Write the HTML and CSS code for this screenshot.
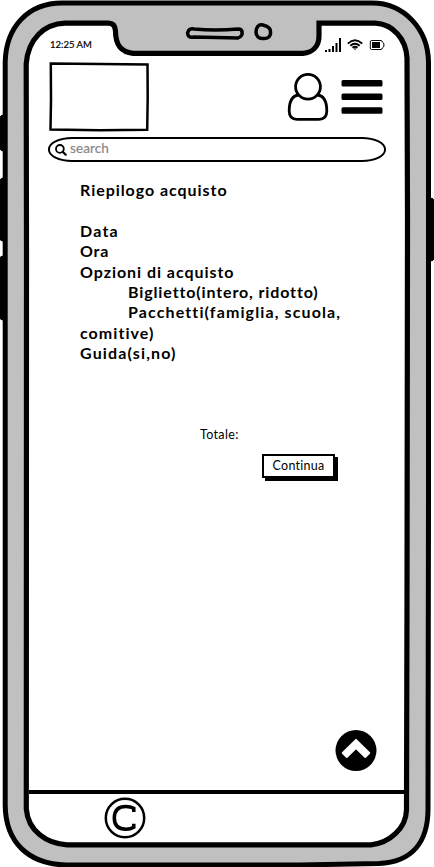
FILE: index.html
```
<!DOCTYPE html>
<html lang="it">
<head>
<meta charset="utf-8">
<meta name="viewport" content="width=device-width">
<title>Riepilogo acquisto</title>
<link rel="stylesheet" href="styles.css">
</head>
<body>
<div class="phone">
  <svg class="frame" viewBox="0 0 434 867" aria-hidden="true">
    <path d="M3 115Q0 115 0 119V147Q0 151 3 151M3 178Q0 178 0 182V238Q0 241 3 241M3 256Q0 256 0 259V317Q0 320 3 320M430 198Q434 198 434 201V258Q434 261 430 261" fill="#000" stroke="#000"/>
    <path class="shell" d="M5.200 62C6 27 28 3 62 3H372C404 3 428 29 428.500 62V500L428 809C428 842 412 862 379 863.500L300 865H66C29 864 5.500 843 5.200 805Z"/>
    <path class="glass" d="M26.200 64C28 39 44 24 65 23.200H108Q115 23 115.500 31C115.500 45 121 52 133 53.300H303C313 52.500 319 46 319 36V23.200H375C393 24 406 39 407 58L407.500 220L407 600L406.500 810C406 828 390 843 371 844.800H67C47 844 28 831 26.300 809L26.500 250Z"/>
    <path class="thin" d="M194 29C188 28 187 33 188 35Q189 38 194 37L238 38Q243 36 242 32Q242 29 238 29Q215 31 194 29Z"/>
    <path class="thin" d="M263 25C258 24 256 28 256 32C256 36 259 39 263 38.500C268 39 271 36 270.500 32Q271 27 263 25Z"/>
  </svg>
  <div class="screen">
    <div class="status">
      <span class="time">12:25 AM</span>
      <svg width="62" height="18" viewBox="323 36 62 18" aria-hidden="true">
        <path d="M325 50h2v2h-2zM328.500 49h2v3h-2zM332 46h2v6h-2zM335.500 43h2v9h-2zM339 38h2v14h-2z"/>
        <g fill="none" stroke="#000" stroke-width="1.900"><path d="M347.800 43.600Q355 36.800 362.200 43.600M350.300 45.800Q355 41.500 359.700 45.800M352.500 47.700Q355 45.800 357.500 47.700"/></g>
        <path d="M353.300 48.500h3.400l-1.700 1.500z"/>
        <path d="M371.500 40.500H381Q382 40.500 382.300 42Q384 42.500 384 45Q384 47.500 382.300 48Q382 49.500 381 49.500H371.500Q370.300 49.500 370.300 48V42Q370.300 40.500 371.500 40.500Z" fill="none" stroke="#000"/>
        <path d="M372 42h8v6h-8z"/>
      </svg>
    </div>
    <header class="header">
      <svg class="logo" width="100" height="70" viewBox="49 62 100 70" aria-hidden="true"><path d="M50.800 63.500L147.500 64.500L147.700 97L147.200 129.700L100 130.300L50.500 129.500L51 100Z" fill="#fff" stroke="#000" stroke-width="2.500"/></svg>
      <div class="actions">
        <svg width="42" height="50" viewBox="287 72 42 50" aria-hidden="true"><g fill="none" stroke="#000" stroke-width="2.800"><circle cx="308" cy="86.800" r="12.400"/><path d="M298.500 95C291 96 289.200 104 289.200 111Q289.200 119.300 297 119.300H319Q326.800 119.300 326.800 111C326.800 104 325 96 317.500 95"/></g></svg>
        <svg width="42" height="36" viewBox="341 79 42 36" aria-hidden="true"><path d="M343 80H381Q382.500 80 382.500 81.500V85Q382.500 86.500 381 86.500H343Q341.500 86.500 341.500 85V81.500Q341.500 80 343 80ZM343 93.500H381Q382.500 93.500 382.500 95V98.500Q382.500 100 381 100H343Q341.500 100 341.500 98.500V95Q341.500 93.500 343 93.500ZM343 107.200H381Q382.500 107.200 382.500 108.700V112.200Q382.500 113.700 381 113.700H343Q341.500 113.700 341.500 112.200V108.700Q341.500 107.200 343 107.200Z"/></svg>
      </div>
    </header>
    <div class="search">
      <svg width="12" height="12" viewBox="0 0 12 12" aria-hidden="true"><circle cx="4.900" cy="4.900" r="3.900" fill="none" stroke="#000" stroke-width="1.800"/><path d="M7.700 7.700L10.700 10.700" stroke="#000" stroke-width="2.200" stroke-linecap="round"/></svg>
      <span>search</span>
    </div>
    <main class="summary">
      <h1 class="l-title">Riepilogo acquisto</h1>
      <p class="l-date">Data</p>
      <p class="l-hour">Ora</p>
      <p class="l-options">Opzioni di acquisto</p>
      <p class="indent l-ticket">Biglietto(intero, ridotto)</p>
      <p class="indent l-pack">Pacchetti(famiglia, scuola,</p>
      <p class="l-group">comitive)</p>
      <p class="l-guide">Guida(si,no)</p>
    </main>
    <div class="total">Totale:</div>
    <button class="continue">Continua</button>
    <svg class="top" width="42" height="42" viewBox="335 730 42 42" aria-hidden="true"><circle cx="356" cy="750.500" r="20.500"/><path d="M356 739.800L369.300 753L365.200 757L356 748.200L346.800 757L342.700 753Z" fill="#fff" stroke="#fff" stroke-width="1.800" stroke-linejoin="round"/></svg>
    <footer class="footer">
      <svg width="42" height="42" viewBox="104 797 42 42" aria-hidden="true"><g fill="none" stroke="#000"><circle cx="125" cy="818" r="19.200" stroke-width="2.500"/><path d="M133.800 812V808.200Q130.500 806.500 126 806.500C118 806.500 114.300 811 114.300 818C114.300 825 118 829.200 126 829.200Q130.500 829.200 133.800 827.200V823.800" stroke-width="3.500"/></g></svg>
    </footer>
  </div>
</div>
</body>
</html>
```
FILE: styles.css
```
* { box-sizing: border-box; }
body { margin: 0; background: #fff; color: #000; font-family: Lato, "Open Sans", sans-serif; overflow: hidden; }
svg { display: block; flex: none; }
.phone { position: relative; width: 434px; height: 867px; }
.frame { position: absolute; inset: 0; width: 434px; height: 867px; }
.shell { fill: #c0c0c0; stroke: #000; stroke-width: 5; }
.glass { fill: #fff; stroke: #000; stroke-width: 5.2; }
.thin { fill: none; stroke: #000; stroke-width: 3.5; }
.screen { position: relative; height: 867px; padding: 36px 28px 0 29px; display: flex; flex-direction: column; }
.status { height: 18px; padding: 0 21px; display: flex; justify-content: space-between; }
.time { font-size: 9.5px; line-height: 17px; -webkit-text-stroke: .2px #000; }
.header { display: flex; justify-content: space-between; margin: 8px 23px 0 20px; height: 70px; }
.actions { display: flex; gap: 12px; padding-top: 10px; }
.actions svg:last-child { margin-top: 7px; }
.search { margin: 5px 19px 0; width: 338px; height: 25px; border: 2px solid #000; border-radius: 24px / 12px; display: flex; align-items: center; gap: 3px; padding-left: 5px; font-size: 13.5px; color: #858585; letter-spacing: .1px; -webkit-text-stroke: .2px #858585; }
.search span { margin-top: -4px; }
.summary { margin: 18px 0 0 51px; font-size: 16px; line-height: 20.4px; font-weight: 700; height: 184px; white-space: nowrap; }
.summary h1 { margin: 0 0 20.4px; font: inherit; }
.summary p { margin: 0; }
.summary .indent { padding-left: 48px; }
.l-title { letter-spacing: .95px; }
.l-date { letter-spacing: 1.2px; }
.l-hour { letter-spacing: .8px; }
.l-options { letter-spacing: .95px; }
.l-ticket { letter-spacing: .87px; }
.l-pack { letter-spacing: 1.12px; }
.l-group { letter-spacing: 1.05px; }
.l-guide { letter-spacing: 1.15px; }
.total { margin: 62px 0 0 171px; height: 18px; font-size: 12.5px; line-height: 18px; letter-spacing: .35px; }
.continue { margin: 10px 0 0 233px; width: 73px; height: 24px; flex: none; padding: 0 0 1px; border: 2px solid #000; background: #fff; color: #000; box-shadow: 3px 3px 0 #000; font: 12.5px/20px Lato, sans-serif; letter-spacing: .25px; white-space: nowrap; }
.top { margin: 252px 0 0 306px; }
.footer { margin-top: 18px; border-top: 4px solid #000; height: 53px; padding: 3px 0 0 75px; width: 376px; }
```
